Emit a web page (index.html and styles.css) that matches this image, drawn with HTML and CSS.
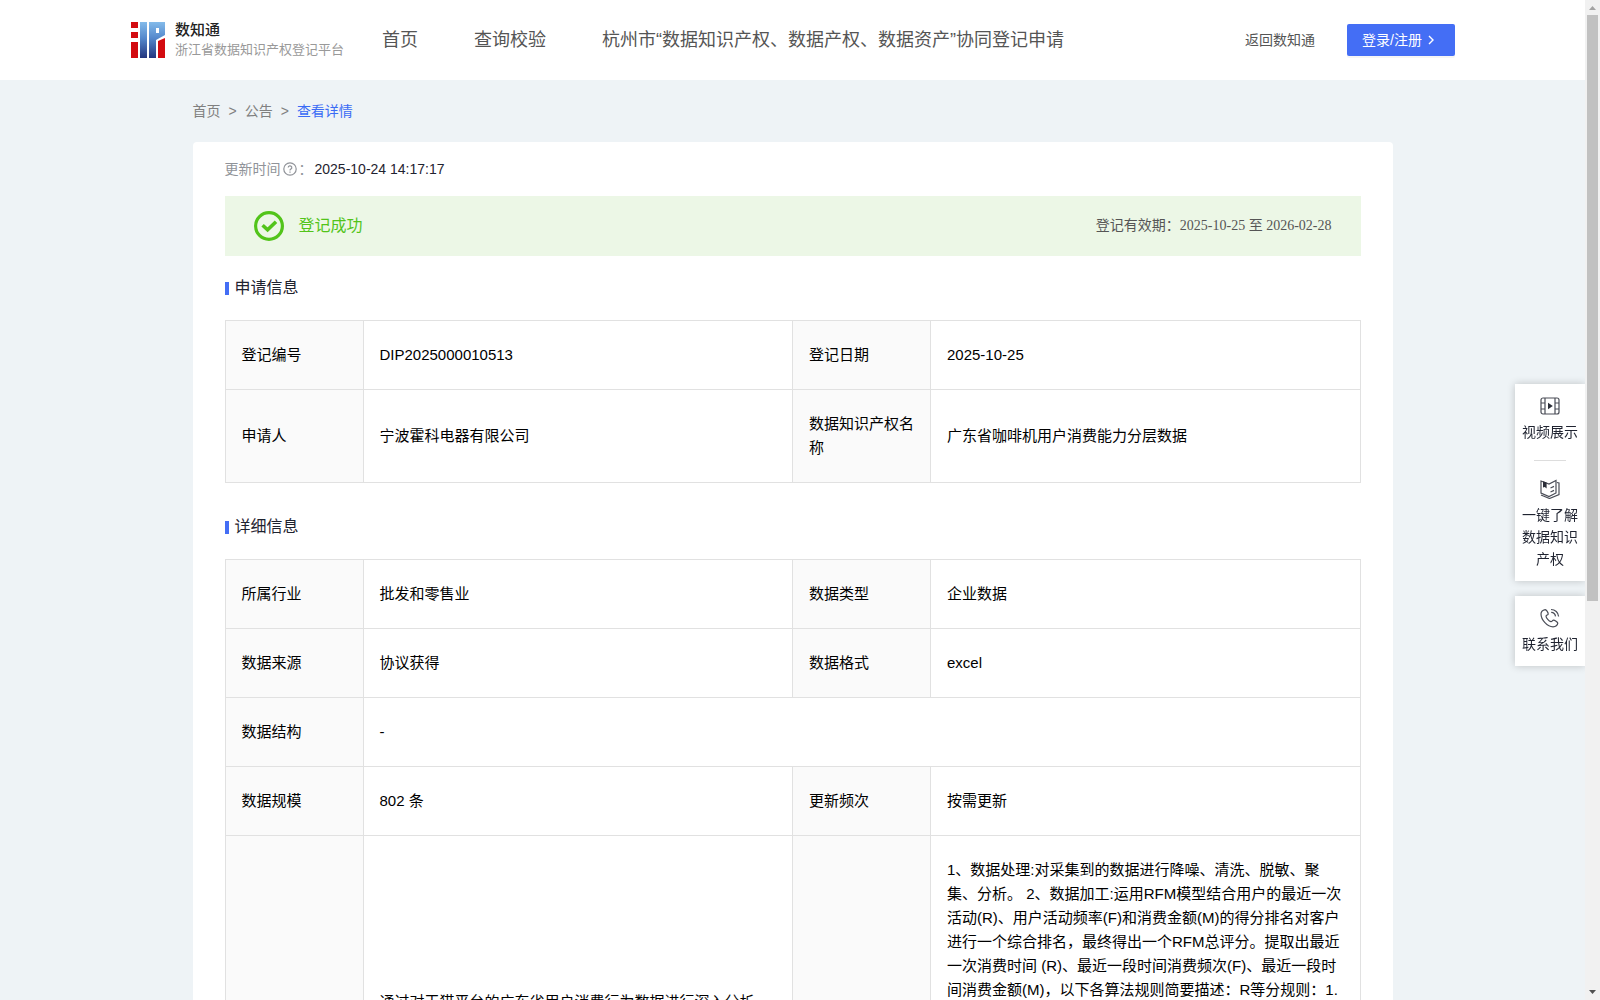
FILE: index.html
```html
<!DOCTYPE html>
<html lang="zh-CN">
<head>
    <meta charset="utf-8">
    <title>浙江省数据知识产权登记平台</title>
    <link rel="stylesheet" href="styles.css">
</head>
<body>
    <header class="header">
        <a class="logo" href="#">
            <svg class="logo-img" viewBox="0 0 34 36" aria-hidden="true">
                <defs>
                    <linearGradient id="logoBlue" x1="0" y1="0" x2="0" y2="1">
                        <stop offset="0" stop-color="#84bbea"/>
                        <stop offset="0.45" stop-color="#5488cc"/>
                        <stop offset="1" stop-color="#24367f"/>
                    </linearGradient>
                </defs>
                <path fill="#d30b10" d="M0 0h7v6H0zM0 10h7v6H0zM0 20h7v16H0zM27 19l7-3v20h-7z"/>
                <path fill="url(#logoBlue)" fill-rule="evenodd" d="M9 0h7v36H9zM18 0h16v13l-9 5v18h-7zM25 6v5h3V6z"/>
            </svg>
            <span class="logo-text">
                <strong>数知通</strong>
                <small>浙江省数据知识产权登记平台</small>
            </span>
        </a>
        <nav class="nav">
            <a href="#">首页</a>
            <a href="#">查询校验</a>
            <a href="#">杭州市“数据知识产权、数据产权、数据资产”协同登记申请</a>
        </nav>
        <div class="header-right">
            <a class="back-link" href="#">返回数知通</a>
            <button type="button" class="login-btn">登录/注册
                <svg width="6" height="10" viewBox="0 0 6 10" aria-hidden="true"><path d="M1 1l4 4-4 4" fill="none" stroke="#fff" stroke-width="1.4"/></svg>
            </button>
        </div>
    </header>

    <main class="container">
        <nav class="breadcrumb">
            <a href="#">首页</a><span>&gt;</span><a href="#">公告</a><span>&gt;</span><a class="current" href="#">查看详情</a>
        </nav>

        <div class="card">
            <div class="update-time">
                <span>更新时间</span>
                <svg class="help-icon" viewBox="0 0 14 14" aria-hidden="true">
                    <circle cx="7" cy="7" r="6.2"/>
                    <path d="M5.2 5.6a1.8 1.7 0 1 1 2.6 1.5q-.8.4-.8 1.3M7 9.6v1.2"/>
                </svg>
                <span>：</span>
                <time>2025-10-24 14:17:17</time>
            </div>

            <!-- Status banner -->
            <div class="status">
                <svg class="status-icon" viewBox="0 0 30 30" aria-hidden="true">
                    <circle cx="15" cy="15" r="13.4" fill="none" stroke="#52c41a" stroke-width="3.2"/>
                    <path d="M8.6 14.2l5 4.6 8.4-8" fill="none" stroke="#52c41a" stroke-width="3.6"/>
                </svg>
                <span class="status-text">登记成功</span>
                <span class="valid">登记有效期：2025-10-25 至 2026-02-28</span>
            </div>

            <h2 class="title">申请信息</h2>
            <table class="info">
                <colgroup><col class="col-label"><col><col class="col-label"><col></colgroup>
                <tr>
                    <th>登记编号</th><td>DIP2025000010513</td>
                    <th>登记日期</th><td>2025-10-25</td>
                </tr>
                <tr>
                    <th>申请人</th><td>宁波霍科电器有限公司</td>
                    <th>数据知识产权名称</th><td>广东省咖啡机用户消费能力分层数据</td>
                </tr>
            </table>

            <h2 class="title title-detail">详细信息</h2>
            <table class="info">
                <colgroup><col class="col-label"><col><col class="col-label"><col></colgroup>
                <tr>
                    <th>所属行业</th><td>批发和零售业</td>
                    <th>数据类型</th><td>企业数据</td>
                </tr>
                <tr>
                    <th>数据来源</th><td>协议获得</td>
                    <th>数据格式</th><td>excel</td>
                </tr>
                <tr>
                    <th>数据结构</th><td colspan="3">-</td>
                </tr>
                <tr>
                    <th>数据规模</th><td>802 条</td>
                    <th>更新频次</th><td>按需更新</td>
                </tr>
                <tr class="long-row">
                    <th></th>
                    <td class="scene">通过对天猫平台的广东省用户消费行为数据进行深入分析</td>
                    <th></th>
                    <td class="rule">1、数据处理:对采集到的数据进行降噪、清洗、脱敏、聚集、分析。 2、数据加工:运用RFM模型结合用户的最近一次活动(R)、用户活动频率(F)和消费金额(M)的得分排名对客户进行一个综合排名，最终得出一个RFM总评分。提取出最近一次消费时间 (R)、最近一段时间消费频次(F)、最近一段时间消费金额(M)，以下各算法规则简要描述：R等分规则：1.</td>
                </tr>
            </table>
        </div>
    </main>

    <!-- Floating links on the right edge -->
    <aside class="side">
        <div class="side-box">
            <a class="side-item" href="#">
                <svg viewBox="0 0 20 20" aria-hidden="true">
                    <rect x="1" y="2" width="18" height="16" rx="2"/>
                    <path d="M5 2v16M15 2v16M1 7h4M1 13h4M15 7h4M15 13h4"/>
                    <path class="solid" d="M8 6.8l4.8 3.2L8 13.2z"/>
                </svg>
                <span>视频展示</span>
            </a>
            <a class="side-item" href="#">
                <svg viewBox="0 0 20 20" aria-hidden="true">
                    <path d="M1 2l8 3 7-3.500v12.500L9 17.500 1 14zM17 3.500l2 .5v11.500L9.500 19.500 1 16M10.500 9l3.500-1.600M10.500 13l3.500-1.600"/>
                    <path class="solid" d="M3 2.200l3.600 1.400v6L4.800 8 3 8.400z"/>
                </svg>
                <span>一键了解数据知识产权</span>
            </a>
        </div>
        <div class="side-box">
            <a class="side-item" href="#">
                <svg viewBox="0 0 20 20" aria-hidden="true">
                    <path d="M5.2 1.6C3 2 1 3.600 1 6c0 6 6.500 12.800 12 12.800 2.400 0 4.500-1.700 4.800-3.600.1-.8-3.300-3.200-4.300-3.100-1 .1-1.500 1.800-2.600 1.600C8.800 13.200 6.200 10 6 8.300c0-1 2-1.300 2.200-2.200C8.400 5 6.400 1.500 5.200 1.600z"/>
                    <path d="M11 1.500c4.200 0 7.300 3 7.600 7M11.200 4.400c2.400.1 4 1.700 4.300 4"/>
                </svg>
                <span>联系我们</span>
            </a>
        </div>
    </aside>

    <div class="scrollbar" aria-hidden="true">
        <svg viewBox="0 0 15 15"><path fill="#a3a3a3" d="M4 10l3.500-4 3.500 4z"/></svg>
        <div class="scroll-track"><div class="scroll-thumb"></div></div>
        <svg viewBox="0 0 15 15"><path fill="#505050" d="M4 5l3.500 4L11 5z"/></svg>
    </div>
</body>
</html>
```
FILE: styles.css
```css
* { box-sizing: border-box; }
html, body { height: 100%; overflow: hidden; }
body {
    margin: 0;
    padding-right: 15px;
    background: #eef3f6;
    color: #1f2330;
    font-family: "Liberation Sans", "Noto Sans CJK SC", sans-serif;
    font-size: 14px;
    line-height: 22px;
}
a { color: inherit; text-decoration: none; }
svg { flex: none; }

/* --- Header --- */
.header {
    display: flex;
    align-items: center;
    height: 80px;
    padding: 0 130px 0 131px;
    background: #fff;
    color: #555;
    white-space: nowrap;
}
.logo { display: flex; align-items: center; gap: 10px; width: 251px; }
.logo-img { width: 34px; height: 36px; }
.logo-text { display: flex; flex-direction: column; line-height: 20px; }
.logo-text strong { font-size: 15px; font-weight: 500; color: #222; }
.logo-text small { font-size: 13px; color: #999; }
.nav { display: flex; gap: 56px; font-size: 18px; }
.header-right { display: flex; align-items: center; gap: 32px; margin-left: auto; }
.login-btn {
    display: flex;
    align-items: center;
    gap: 6px;
    width: 108px;
    height: 32px;
    padding: 0 15px;
    border: 0;
    border-radius: 2px;
    background: #446ef5;
    box-shadow: 0 2px 0 rgba(0, 0, 0, 0.04);
    color: #fff;
    font: inherit;
    cursor: pointer;
}

/* --- Content --- */
.container { max-width: 1200px; margin: 0 auto; }
.breadcrumb { display: flex; align-items: center; gap: 8px; height: 62px; color: #808080; }
.breadcrumb .current { color: #3a6bf5; }
.card { padding: 16px 32px 32px; border-radius: 4px; background: #fff; }
.update-time { display: flex; align-items: center; color: #909399; }
.update-time time { margin-left: 2px; color: #1f2330; }
.help-icon { width: 14px; height: 14px; margin: 0 2px; fill: none; stroke: #909399; stroke-width: 1.2; }

.status {
    display: flex;
    align-items: center;
    height: 60px;
    margin-top: 16px;
    padding: 0 29px;
    background: #ecf7e6;
}
.status-icon { width: 30px; height: 30px; }
.status-text { margin-left: 15px; font-size: 16px; color: #52c41a; }
.valid { margin-left: auto; color: #555; font-family: "Liberation Serif", "Noto Sans CJK SC", serif; }

.title {
    display: flex;
    align-items: center;
    gap: 6px;
    margin: 20px 0;
    font-size: 16px;
    font-weight: 400;
    line-height: 24px;
}
.title::before { content: ""; width: 4px; height: 13px; background: #446ef5; }
.title-detail { margin-top: 32px; }

/* --- Tables --- */
.info { width: 100%; table-layout: fixed; border-collapse: collapse; color: #000; font-size: 15px; line-height: 24px; }
.info th, .info td { padding: 22px 16px; border: 1px solid #e1e1e1; font-weight: 400; text-align: left; }
.info th { background: #fafafa; padding-right: 14px; }
.col-label { width: 138px; }
.long-row { height: 429px; }
.info .rule { vertical-align: top; }
.info .scene { padding-top: 154px; vertical-align: top; }

/* --- Floating links --- */
.side { position: fixed; top: 384px; right: 15px; width: 70px; }
.side-box { margin-bottom: 15px; background: #fff; box-shadow: 0 0 8px rgba(0, 0, 0, 0.2); clip-path: inset(-10px 0 -10px -10px); }
.side-item { display: flex; flex-direction: column; align-items: center; gap: 5px; padding: 12px 7px 11px; text-align: center; }
.side-item + .side-item::before { content: ""; width: 32px; height: 1px; margin: -7px 0 13px; background: #ddd; }
.side-item + .side-item { padding-top: 13px; }
.side-item svg { width: 20px; height: 20px; fill: none; stroke: #4a4d57; stroke-width: 1.2; }
.side-item .solid { fill: #2b2e38; stroke: none; }

/* --- Scrollbar --- */
.scrollbar { position: fixed; top: 0; right: 0; bottom: 0; display: flex; flex-direction: column; width: 15px; background: #f1f1f1; }
.scrollbar svg { width: 15px; height: 15px; }
.scroll-track { flex: 1; padding: 0 2px; }
.scroll-thumb { height: 60.4%; background: #c1c1c1; }
```
